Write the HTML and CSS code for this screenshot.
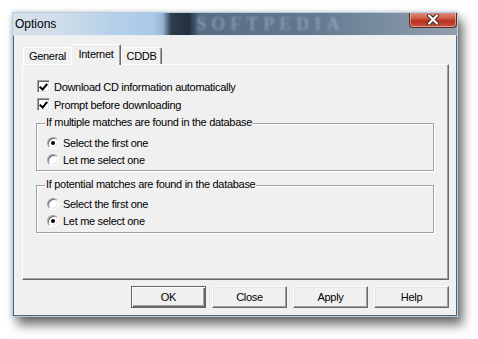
FILE: index.html
```html
<!DOCTYPE html>
<html lang="en">
<head>
    <meta charset="UTF-8">
    <title>Options</title>
    <link rel="stylesheet" href="styles.css">
</head>
<body>
<div class="desktop">
<div class="window">
    <div class="titlebar">
        <span class="title">Options</span>
        <span class="glass-mark">SOFTPEDIA</span>
        <div class="close-btn">
            <svg width="16" height="11" viewBox="0 0 16 11">
                <path d="M4 1.5 L12 9.5 M12 1.5 L4 9.5" stroke="#3a2a28" stroke-width="4" stroke-linecap="round"/>
                <path d="M4 1.5 L12 9.5 M12 1.5 L4 9.5" stroke="#ffffff" stroke-width="2.2" stroke-linecap="round"/>
            </svg>
        </div>
    </div>

    <div class="client">
        <div class="tabs">
            <div class="tab tab-general">General</div>
            <div class="tab tab-internet active">Internet</div>
            <div class="tab tab-cddb">CDDB</div>
        </div>

        <div class="panel">
            <div class="check-row">
                <span class="checkbox checked"></span>
                <span>Download CD information automatically</span>
            </div>
            <div class="check-row">
                <span class="checkbox checked"></span>
                <span>Prompt before downloading</span>
            </div>

            <div class="group group-first">
                <span class="legend">If multiple matches are found in the database</span>
                <div class="radio-row"><span class="radio checked"></span><span>Select the first one</span></div>
                <div class="radio-row"><span class="radio"></span><span>Let me select one</span></div>
            </div>

            <div class="group">
                <span class="legend">If potential matches are found in the database</span>
                <div class="radio-row"><span class="radio"></span><span>Select the first one</span></div>
                <div class="radio-row"><span class="radio checked"></span><span>Let me select one</span></div>
            </div>
        </div>

        <div class="buttons">
            <button class="default">OK</button>
            <button>Close</button>
            <button>Apply</button>
            <button>Help</button>
        </div>
    </div>
</div>
</div>
</body>
</html>
```

FILE: styles.css
```css
/* Win7 style options dialog */
* { box-sizing: border-box; }
body {
    margin: 0;
    background-color: #ffffff;
    font-family: "Liberation Sans", Arial, sans-serif;
    font-size: 11px;
    letter-spacing: -0.3px;
    color: #000000;
}
.desktop {
    height: 339px;
    padding: 12px 0 0 12px;
}

.window {
    width: 446px;
    height: 305px;
    border: 1px solid #b4cde6;
    display: flex;
    flex-direction: column;
    box-shadow: 5px 8px 10px rgba(0,0,0,0.55), 0 0 5px rgba(0,0,0,0.2);
}

/* Titelleiste (Glas) */
.titlebar {
    height: 22px;
    display: flex;
    align-items: center;
    overflow: hidden;
    background: linear-gradient(90deg, #d6e0ea 0, #cfdcea 50px, #b6d0ea 100px, #a9c9e9 140px, #95b4d2 150px, #2e3e4e 158px, #22303d 176px, #566d84 186px, #627990 300px, #7d90a2 380px, #929eaa 444px);
}
.title {
    font-size: 12px;
    letter-spacing: 0;
    padding-left: 2px;
    color: #000000;
}
.glass-mark {
    margin-left: 140px;
    font-family: "Liberation Serif", serif;
    font-weight: bold;
    font-size: 18px;
    letter-spacing: 5px;
    color: rgba(160,182,204,0.55);
    filter: blur(1.2px);
}
.close-btn {
    margin-left: auto;
    align-self: flex-start;
    width: 48px;
    height: 16px;
    margin-top: -1px;
    border: 1px solid #5a2e26;
    border-top: none;
    border-radius: 0 0 4px 4px;
    background: linear-gradient(#e09a88 0, #d0604a 40%, #b8301c 60%, #c85440 100%);
    box-shadow: inset 0 0 0 1px rgba(255,220,210,0.5);
    display: flex;
    align-items: center;
    justify-content: center;
}

/* Client-Bereich */
.client {
    flex: 1;
    background-color: #f0f0f0;
    border: 1px solid #56636f;
    border-top-color: #e6edf4;
    padding: 8px 7px 7px 8px;
    display: flex;
    flex-direction: column;
}

.tabs {
    height: 20px;
    display: flex;
    align-items: flex-end;
    margin-left: 1px;
}
.tab {
    height: 17px;
    padding-top: 2px;
    text-align: center;
    background-color: #f0f0f0;
    border: 1px solid;
    border-color: #ffffff #696969 transparent #ffffff;
    border-bottom: none;
    border-radius: 2px 2px 0 0;
    box-shadow: inset -1px 0 0 #a0a0a0;
}
.tab-general { width: 48px; border-right: none; box-shadow: none; }
.tab-internet { width: 50px; }
.tab-cddb { width: 41px; border-left-color: #ffffff; }
.tab.active {
    height: 21px;
    margin-bottom: -1px;
    padding-top: 3px;
    position: relative;
    z-index: 1;
}

.panel {
    height: 216px;
    width: 427px;
    border: 1px solid;
    border-color: #ffffff #696969 #696969 #ffffff;
    box-shadow: inset -1px -1px 0 #a0a0a0;
    padding: 15px 14px 0 13px;
}

.check-row {
    display: flex;
    align-items: center;
    height: 13px;
    margin-bottom: 5px;
    margin-left: 1px;
}
.checkbox {
    width: 13px;
    height: 13px;
    margin-right: 4px;
    background-color: #ffffff;
    border: 1px solid;
    border-color: #a0a0a0 #ffffff #ffffff #a0a0a0;
    box-shadow: inset 1px 1px 0 #696969, inset -1px -1px 0 #e3e3e3;
    position: relative;
}
.checkbox.checked::after {
    content: "";
    position: absolute;
    left: 3px;
    top: 1px;
    width: 3px;
    height: 6px;
    border: solid #000000;
    border-width: 0 2px 2px 0;
    transform: rotate(40deg);
}

.group {
    position: relative;
    width: 398px;
    border: 1px solid #a0a0a0;
    box-shadow: inset 1px 1px 0 #ffffff, 1px 1px 0 #ffffff;
    padding: 12px 0 5px 10px;
    margin-top: 14px;
}
.group-first { margin-top: 12px; padding-top: 13px; padding-bottom: 4px; }
.legend {
    position: absolute;
    left: 8px;
    top: -8px;
    padding: 0 1px;
    background-color: #f0f0f0;
}
.radio-row {
    display: flex;
    align-items: center;
    height: 12px;
}
.radio-row + .radio-row { margin-top: 5px; }
.radio {
    width: 12px;
    height: 12px;
    margin-right: 4px;
    border-radius: 50%;
    background-color: #ffffff;
    border: 1px solid;
    border-color: #a0a0a0 #ffffff #ffffff #a0a0a0;
    box-shadow: inset 1px 1px 0 #696969, inset -1px -1px 0 #e3e3e3;
    display: flex;
    align-items: center;
    justify-content: center;
}
.radio.checked::after {
    content: "";
    width: 4px;
    height: 4px;
    border-radius: 50%;
    background-color: #000000;
}

.buttons {
    margin-top: 6px;
    display: flex;
    justify-content: flex-end;
    gap: 6px;
    width: 427px;
}
button {
    width: 75px;
    height: 22px;
    font-family: "Liberation Sans", Arial, sans-serif;
    font-size: 11px;
    letter-spacing: -0.3px;
    color: #000000;
    background-color: #f0f0f0;
    border: 1px solid;
    border-color: #ffffff #696969 #696969 #ffffff;
    box-shadow: inset -1px -1px 0 #a0a0a0, inset 1px 1px 0 #e3e3e3;
    padding: 0;
}
button.default {
    border: 1px solid #646464;
    box-shadow: inset 1px 1px 0 #ffffff, inset -1px -1px 0 #696969, inset -2px -2px 0 #a0a0a0;
}
```
